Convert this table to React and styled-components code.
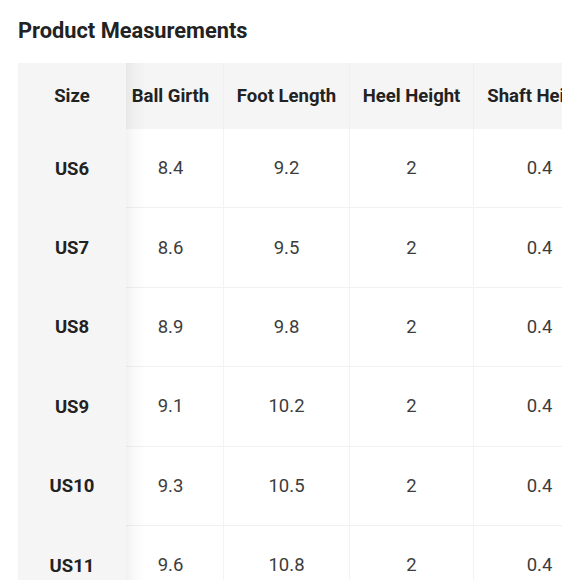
import React, { useEffect, useRef } from "react";
import styled, { createGlobalStyle } from "styled-components";

const Global = createGlobalStyle`
  html, body { margin: 0; padding: 0; background: #ffffff; }
  body { font-family: Roboto, "Noto Sans", Arial, sans-serif; -webkit-font-smoothing: antialiased; }
`;

const Page = styled.div`
  padding: 17px 18px 0 18px;
  width: 580px;
  box-sizing: border-box;
`;

const Title = styled.h2`
  margin: 0 0 18px 0;
  font-size: 21.8px;
  line-height: 28px;
  font-weight: 700;
  color: #222222;
`;

const Scroller = styled.div`
  width: 544px;
  overflow-x: auto;
  scrollbar-width: none;
  &::-webkit-scrollbar { display: none; }
`;

const Table = styled.table`
  border-collapse: separate;
  border-spacing: 0;
  table-layout: fixed;
  width: 595px;
`;

const HeadCell = styled.th`
  box-sizing: border-box;
  height: 66px;
  padding: 0;
  background: #f5f5f5;
  color: #222222;
  font-size: 18.5px;
  font-weight: 700;
  text-align: center;
  white-space: nowrap;
  border-left: ${(p) => (p.$divider ? "1px solid #efefef" : "none")};
  ${(p) =>
    p.$sticky &&
    `
    position: sticky;
    left: 0;
    z-index: 2;
  `}
`;

const SizeCell = styled.th`
  box-sizing: border-box;
  position: sticky;
  left: 0;
  z-index: 2;
  height: 79.4px;
  padding: 0;
  background: #f5f5f5;
  color: #222222;
  font-size: 18.5px;
  font-weight: 700;
  text-align: center;
`;

const ShadowWrap = styled.div`
  position: absolute;
  inset: 0;
  pointer-events: none;
`;

const Shadow = styled.span`
  position: absolute;
  top: 0;
  bottom: 0;
  left: 100%;
  width: 20px;
  background: linear-gradient(
    to right,
    rgba(0, 0, 0, 0.05),
    rgba(0, 0, 0, 0.02) 45%,
    rgba(0, 0, 0, 0)
  );
`;

const DataCell = styled.td`
  box-sizing: border-box;
  height: 79.4px;
  padding: 0;
  background: #ffffff;
  color: #3d3d3d;
  font-size: 18.5px;
  font-weight: 400;
  text-align: center;
  border-bottom: 1px solid #f1f1f1;
  border-left: ${(p) => (p.$divider ? "1px solid #f3f3f3" : "none")};
`;

const columns = [
  { key: "ball", label: "Ball Girth", w: 105 },
  { key: "foot", label: "Foot Length", w: 126 },
  { key: "heel", label: "Heel Height", w: 124 },
  { key: "shaft", label: "Shaft Height", w: 132 },
];

const rows = [
  { size: "US6", ball: "8.4", foot: "9.2", heel: "2", shaft: "0.4" },
  { size: "US7", ball: "8.6", foot: "9.5", heel: "2", shaft: "0.4" },
  { size: "US8", ball: "8.9", foot: "9.8", heel: "2", shaft: "0.4" },
  { size: "US9", ball: "9.1", foot: "10.2", heel: "2", shaft: "0.4" },
  { size: "US10", ball: "9.3", foot: "10.5", heel: "2", shaft: "0.4" },
  { size: "US11", ball: "9.6", foot: "10.8", heel: "2", shaft: "0.4" },
];

function StickyInner({ children }) {
  return (
    <>
      {children}
      <ShadowWrap>
        <Shadow />
      </ShadowWrap>
    </>
  );
}

export default function App() {
  const ref = useRef(null);
  useEffect(() => {
    if (ref.current) ref.current.scrollLeft = 8;
  }, []);
  return (
    <Page>
      <Global />
      <Title>Product Measurements</Title>
      <Scroller ref={ref}>
        <Table>
          <colgroup>
            <col style={{ width: 108 }} />
            {columns.map((c) => (
              <col key={c.key} style={{ width: c.w }} />
            ))}
          </colgroup>
          <thead>
            <tr>
              <HeadCell $sticky>
                <StickyInner>Size</StickyInner>
              </HeadCell>
              {columns.map((c, i) => (
                <HeadCell key={c.key} $divider={i > 0}>
                  {c.label}
                </HeadCell>
              ))}
            </tr>
          </thead>
          <tbody>
            {rows.map((r) => (
              <tr key={r.size}>
                <SizeCell>
                  <StickyInner>{r.size}</StickyInner>
                </SizeCell>
                {columns.map((c, i) => (
                  <DataCell key={c.key} $divider={i > 0}>
                    {r[c.key]}
                  </DataCell>
                ))}
              </tr>
            ))}
          </tbody>
        </Table>
      </Scroller>
    </Page>
  );
}
